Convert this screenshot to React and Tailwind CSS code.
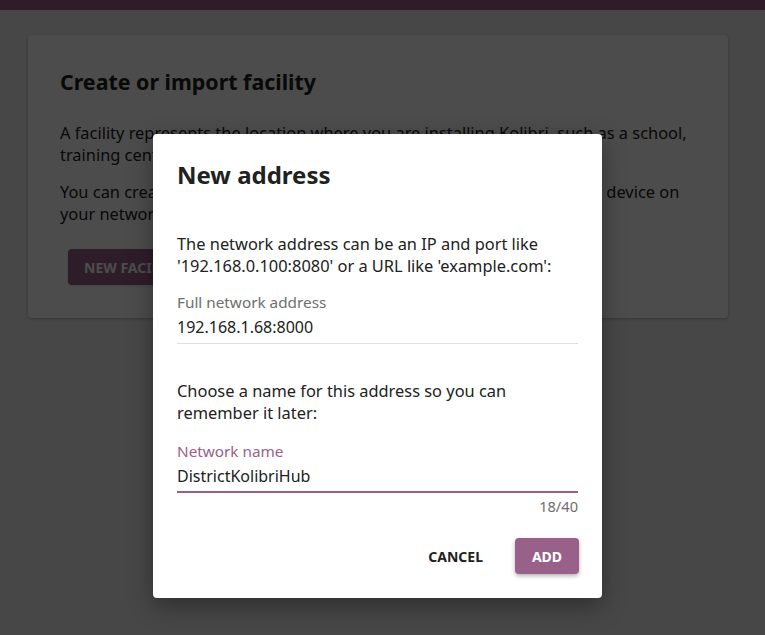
import React from "react";

const font = { fontFamily: "'Noto Sans', sans-serif" };

function FacilityCard() {
  return (
    <div className="mx-[28px] mt-[25px] w-[700px] rounded bg-white px-8 pt-[32px] pb-[33px] shadow-[0_1px_3px_rgba(0,0,0,0.25)]">
      <h1 className="text-[21.4px] font-bold leading-[30px] text-[#212121]">Create or import facility</h1>
      <p className="mt-[25px] text-[16.4px] leading-[22px] text-[#212121]">
        A facility represents the location where you are installing Kolibri, such as a school,
        training center, or a home.
      </p>
      <p className="mt-[15px] text-[16.4px] leading-[22px] text-[#212121]">
        You can create a new facility or import an existing facility from another device on
        your network.
      </p>
      <button className="mt-[24px] ml-2 h-9 rounded bg-[#996189] px-4 text-[14px] font-bold uppercase text-white shadow">
        New facility
      </button>
    </div>
  );
}

function TextField({ label, value, focused, counter }) {
  return (
    <div>
      <div className={`text-[15.3px] leading-[20px] ${focused ? "text-[#996189]" : "text-[#6e6e6e]"}`}>{label}</div>
      <div
        className={`mt-[4px] text-[16px] leading-[22px] text-[#212121] ${
          focused ? "border-b-2 border-[#996189] pb-[4px]" : "border-b border-[#e0e0e0] pb-[5px]"
        }`}
      >
        {value}
      </div>
      {counter && <div className="mt-[3px] text-right text-[14.6px] leading-[20px] text-[#6e6e6e]">{counter}</div>}
    </div>
  );
}

function NewAddressModal() {
  return (
    <div className="w-[449px] rounded bg-white px-6 pt-[25px] pb-6 shadow-[0_8px_24px_rgba(0,0,0,0.35)]">
      <h2 className="text-[24px] font-bold leading-[32px] text-[#212121]">New address</h2>

      <p className="mt-[42px] text-[16.4px] leading-[22px] text-[#212121]">
        The network address can be an IP and port like '192.168.0.100:8080' or a URL like 'example.com':
      </p>
      <div className="mt-[15px]">
        <TextField label="Full network address" value="192.168.1.68:8000" />
      </div>

      <p className="mt-[36px] text-[16.4px] leading-[22px] text-[#212121]">
        Choose a name for this address so you can remember it later:
      </p>
      <div className="mt-[17px]">
        <TextField label="Network name" value="DistrictKolibriHub" focused counter="18/40" />
      </div>

      <div className="mt-[22px] flex items-center justify-end gap-4">
        <button className="h-9 px-4 text-[14px] font-bold uppercase text-[#212121]">Cancel</button>
        <button className="-mr-px h-9 w-16 rounded bg-[#996189] text-[14px] font-bold uppercase text-white shadow-[0_2px_4px_rgba(0,0,0,0.3)]">
          Add
        </button>
      </div>
    </div>
  );
}

export default function App() {
  return (
    <div className="relative h-[635px] overflow-hidden bg-[#ededed]" style={font}>
      <div className="h-[10px] bg-[#996189]" />
      <FacilityCard />

      {/* overlay + dialog */}
      <div className="absolute inset-0 bg-black/70 pl-[153px] pt-[134px]">
        <NewAddressModal />
      </div>
    </div>
  );
}
